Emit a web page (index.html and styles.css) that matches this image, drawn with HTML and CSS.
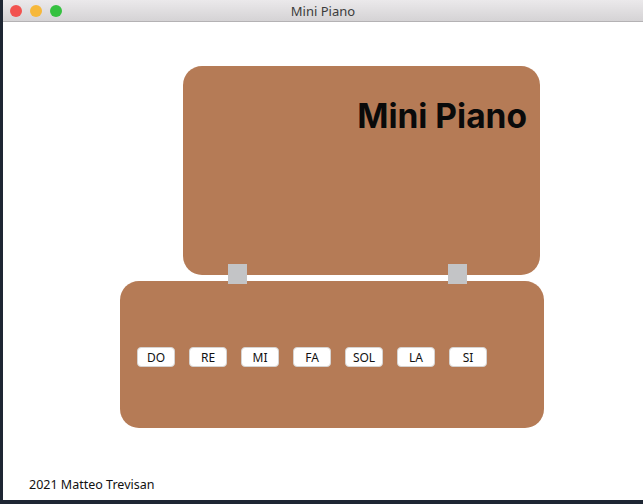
FILE: index.html
```html
<!DOCTYPE html>
<html lang="en">

<head>
    <meta charset="UTF-8">
    <title>Mini Piano</title>
    <link rel="stylesheet" href="styles.css">
</head>

<body>
    <div class="window">
        <div class="titlebar">
            <div class="lights">
                <span class="light red"></span>
                <span class="light yellow"></span>
                <span class="light green"></span>
            </div>
            <div class="win-title">Mini Piano</div>
        </div>
        <div class="content">
            <div class="piano">
                <div class="lid">
                    <h1 class="piano-title">Mini Piano</h1>
                </div>
                <div class="hinge hinge-left"></div>
                <div class="hinge hinge-right"></div>
                <div class="keyboard">
                    <button class="key">DO</button>
                    <button class="key">RE</button>
                    <button class="key">MI</button>
                    <button class="key">FA</button>
                    <button class="key">SOL</button>
                    <button class="key">LA</button>
                    <button class="key">SI</button>
                </div>
            </div>
            <p class="footer">2021 Matteo Trevisan</p>
        </div>
    </div>
</body>

</html>
```

FILE: styles.css
```css
html,
body {
    margin: 0;
    height: 100%;
}

body {
    background: #1e2633;
    padding: 0 0 4px 3px;
    box-sizing: border-box;
}

.window {
    height: 100%;
    background: #ffffff;
    display: flex;
    flex-direction: column;
}

.titlebar {
    height: 21px;
    background: linear-gradient(#ebe9eb, #d5d3d5);
    border-bottom: 1px solid #b4b2b4;
    display: flex;
    align-items: center;
    position: relative;
}

.lights {
    display: flex;
    gap: 8px;
    padding-left: 7px;
}

.light {
    width: 12px;
    height: 12px;
    border-radius: 50%;
}

.red {
    background: #f2524f;
}

.yellow {
    background: #f6b83a;
}

.green {
    background: #35c140;
}

.win-title {
    position: absolute;
    left: 0;
    right: 0;
    text-align: center;
    font-family: "Noto Sans", sans-serif;
    font-size: 13px;
    color: #3c3c3c;
}

.content {
    flex: 1;
    display: flex;
    flex-direction: column;
}

.piano {
    position: relative;
    margin-top: 44px;
    display: flex;
    flex-direction: column;
    gap: 6px;
}

.lid {
    margin-left: 180px;
    width: 357px;
    height: 209px;
    background: #b57b56;
    border-radius: 19px;
    box-sizing: border-box;
    padding: 30px 13px 0 0;
}

.piano-title {
    margin: 0;
    text-align: right;
    font-family: Inter, sans-serif;
    font-weight: 700;
    font-size: 33.5px;
    color: #0a0a0a;
}

.hinge {
    position: absolute;
    top: 198px;
    width: 19px;
    height: 20px;
    background: #c3c4c6;
}

.hinge-left {
    left: 225px;
}

.hinge-right {
    left: 445px;
}

.keyboard {
    margin-left: 117px;
    width: 424px;
    height: 147px;
    background: #b57b56;
    border-radius: 19px;
    box-sizing: border-box;
    padding: 66px 0 0 17px;
    display: flex;
    align-items: flex-start;
    gap: 14px;
}

.key {
    width: 38px;
    height: 20px;
    padding: 0;
    border: 1px solid #d6d3d1;
    border-radius: 4px;
    background: #ffffff;
    font-family: "Noto Sans", sans-serif;
    font-size: 12px;
    color: #111111;
}

.footer {
    margin: auto 0 7px 26px;
    font-family: "Noto Sans", sans-serif;
    font-size: 12.5px;
    color: #111111;
}
```
